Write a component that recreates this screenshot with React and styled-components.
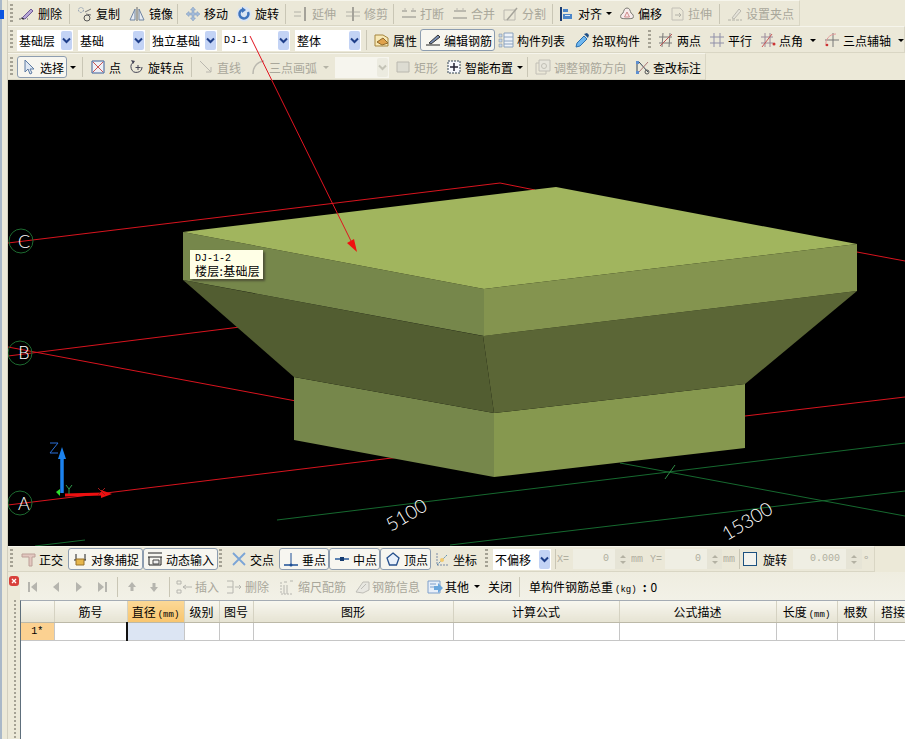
import React from 'react';
import styled, { createGlobalStyle } from 'styled-components';

const GlobalStyle = createGlobalStyle`
  html, body { margin: 0; padding: 0; background: #ece9d8; }
  body { font-family: "Noto Sans CJK SC", "Liberation Sans", sans-serif; font-size: 12px; color: #000; }
`;

const Page = styled.div`
  position: relative;
  display: flex;
  width: 905px;
  height: 739px;
  overflow: hidden;
  background: #ece9d8;
`;

const LeftEdge = styled.div`
  flex: none;
  width: 8px;
  box-sizing: border-box;
  border-left: 2px solid #a9b8c8;
  border-right: 1px solid #d2cfbf;
  background: #ece9d8;
`;

const WindowTab = styled.div`
  width: 4px;
  height: 9px;
  margin: 10px 0 0 -2px;
  background: #0a55e0;
`;

const Main = styled.div`
  flex: 1;
  min-width: 0;
  display: flex;
  flex-direction: column;
`;

const Toolbar = styled.div`
  flex: none;
  display: flex;
  align-items: center;
  box-sizing: border-box;
  height: ${p => p.$h || 27}px;
  width: ${p => (p.$w ? `${p.$w}px` : '100%')};
  padding: ${p => p.$pt ?? 1}px 0 0 2px;
  background: #ebe8d8;
  border-top: 1px solid #f6f5ec;
  border-bottom: 1px solid #d9d6c4;
  border-right: 1px solid #d9d6c4;
  white-space: nowrap;
  overflow: hidden;
`;

const Grip = styled.div`
  flex: none;
  width: 3px;
  height: 20px;
  margin: 0 ${p => p.$mr || 0}px 0 ${p => p.$ml || 0}px;
  background: repeating-linear-gradient(to bottom, #a5a294 0 2px, transparent 2px 4px);
`;

const Sep = styled.div`
  flex: none;
  width: 8px;
  height: 20px;
  background: linear-gradient(#c9c6b5, #c9c6b5) center / 1px 100% no-repeat;
`;

const ToolItem = styled.div`
  flex: none;
  display: flex;
  align-items: center;
  box-sizing: border-box;
  width: ${p => p.$w}px;
  height: ${p => (p.$pressed ? 22 : 21)}px;
  color: ${p => (p.$off ? '#a9a79b' : '#000')};
  border: ${p => (p.$pressed ? '1px solid #8d9db0' : 'none')};
  border-radius: ${p => (p.$pressed ? 3 : 0)}px;
  background: ${p => (p.$pressed ? '#f7f6f0' : 'transparent')};
  svg { opacity: ${p => (p.$off ? 0.42 : 1)}; filter: ${p => (p.$off ? 'grayscale(1)' : 'none')}; }
`;

const IconSlot = styled.span`
  flex: none;
  display: flex;
  align-items: center;
  justify-content: center;
  width: ${p => p.$w}px;
`;

const Caret = styled.span`
  flex: none;
  width: 0;
  height: 0;
  margin-left: ${p => p.$ml}px;
  border-left: 3px solid transparent;
  border-right: 3px solid transparent;
  border-top: 3px solid ${p => (p.$off ? '#b5b3a6' : '#000')};
`;

const SelectBox = styled.div`
  flex: none;
  display: flex;
  align-items: center;
  justify-content: space-between;
  width: ${p => p.$w}px;
  height: 21px;
  margin-right: ${p => p.$mr ?? 5}px;
  padding-left: 2px;
  box-sizing: border-box;
  background: ${p => (p.$off ? '#f6f5ee' : '#fff')};
  font-family: ${p => (p.$mono ? '"Liberation Mono", monospace' : 'inherit')};
  font-size: ${p => (p.$mono ? 10 : 12)}px;
`;

const ArrowBox = styled.span`
  flex: none;
  display: flex;
  align-items: center;
  justify-content: center;
  width: 11px;
  height: 19px;
  margin-right: 1px;
  border-radius: 2px;
  background: ${p => (p.$off ? '#ecebe0' : '#c3d3f5')};
`;

const NumLabel = styled.span`
  flex: none;
  width: ${p => p.$w}px;
  margin-left: ${p => p.$ml || 0}px;
  font-family: "Liberation Mono", monospace;
  font-size: 10px;
  color: #b0ae9f;
`;

const NumInput = styled.div`
  flex: none;
  box-sizing: border-box;
  width: ${p => p.$w}px;
  height: 20px;
  margin-left: ${p => p.$ml || 0}px;
  padding-right: 6px;
  text-align: right;
  line-height: 20px;
  font-family: "Liberation Mono", monospace;
  font-size: 10px;
  color: #b0ae9f;
  background: #efeee3;
`;

const Spinner = styled.div`
  flex: none;
  display: flex;
  flex-direction: column;
  align-items: center;
  justify-content: center;
  gap: 3px;
  width: ${p => p.$w || 15}px;
  height: 20px;
  background: #e6e4d6;
`;

const SpinUp = styled.i`
  width: 0;
  height: 0;
  border-left: 3px solid transparent;
  border-right: 3px solid transparent;
  border-bottom: 3px solid #b3b1a3;
`;

const SpinDown = styled(SpinUp)`
  border-bottom: none;
  border-top: 3px solid #b3b1a3;
`;

const CheckBox = styled.div`
  flex: none;
  box-sizing: border-box;
  width: 14px;
  height: 14px;
  border: 1px solid #1c5180;
  background: #f3f3ee;
`;

const PlainLabel = styled.span`
  flex: none;
  margin-left: ${p => p.$ml || 0}px;
  color: ${p => p.$color || '#000'};
`;

const Viewport = styled.div`
  position: relative;
  flex: none;
  height: 466px;
  background: #000;
  overflow: hidden;
  svg { display: block; }
`;

const Tooltip = styled.div`
  position: absolute;
  left: 182px;
  top: 170px;
  box-sizing: border-box;
  width: 73px;
  height: 29px;
  padding: 3px 0 0 5px;
  line-height: 12px;
  letter-spacing: 0.3px;
  white-space: nowrap;
  background: #ffffe6;
  box-shadow: 2px 2px 2px rgba(70, 70, 50, 0.85);
`;

const TipCode = styled.div`
  font-family: "Liberation Mono", monospace;
  font-size: 10px;
  letter-spacing: 0;
`;

const Panel = styled.div`
  flex: 1;
  min-height: 0;
  display: flex;
`;

const PanelSide = styled.div`
  flex: none;
  display: flex;
  flex-direction: column;
  align-items: center;
  box-sizing: border-box;
  width: 12px;
  padding-top: 4px;
  background: #ece9d8;
`;

const CloseBadge = styled.svg`
  flex: none;
  display: block;
`;

const SideDots = styled.div`
  flex: 1;
  width: 2px;
  margin: 14px 0 0 2px;
  background: repeating-linear-gradient(to bottom, #a5a294 0 2px, transparent 2px 4px);
`;

const PanelBody = styled.div`
  flex: 1;
  min-width: 0;
  display: flex;
  flex-direction: column;
`;

const PanelBar = styled.div`
  flex: none;
  display: flex;
  align-items: center;
  box-sizing: border-box;
  height: 28px;
  padding: 1px 0 0 1px;
  white-space: nowrap;
  background: linear-gradient(#efede0, #f2f1e7);
`;

const WeightLabel = styled.span`
  flex: none;
  margin-left: 6px;
`;

const Unit = styled.span`
  margin: 0 0 0 2px;
  font-family: "Liberation Mono", monospace;
  font-size: 9px;
`;

const Colon = styled.span`
  margin: 0 4px 0 6px;
  font-weight: 700;
`;

const TableWrap = styled.div`
  flex: 1;
  min-height: 0;
  overflow: hidden;
  background: #fff;
  border-left: 1px solid #5e6f7c;
  border-top: 1px solid #a5acb4;
`;

const Grid = styled.table`
  table-layout: fixed;
  width: 891px;
  border-collapse: collapse;
`;

const HeadCell = styled.th`
  height: 21px;
  padding: 0;
  font-weight: 400;
  box-sizing: border-box;
  border-right: 1px solid #d5d2c2;
  border-bottom: 1px solid #bcb9a8;
  background: ${p => (p.$active
    ? 'linear-gradient(#fbd896, #f8c56f)'
    : 'linear-gradient(#f8f7ef, #e6e3d3)')};
`;

const BodyCell = styled.td`
  height: 18px;
  padding: 0;
  box-sizing: border-box;
  text-align: center;
  border-right: 1px solid #c6c6c6;
  border-bottom: 1px solid #c6c6c6;
  border-left: ${p => (p.$current ? '2px solid #111' : 'none')};
  background: ${p => (p.$current ? '#dce5f3' : p.$mark ? '#fbd191' : '#fff')};
  font-family: ${p => (p.$mark ? '"Liberation Mono", monospace' : 'inherit')};
  font-size: ${p => (p.$mark ? 10 : 12)}px;
`;

const Annotation = styled.svg`
  position: absolute;
  left: 0;
  top: 0;
  pointer-events: none;
`;

// toolbar glyphs, all on a 16x16 grid
const glyphs = {
  erase: <><path d="M1 13h6M9 13h1" stroke="#666" strokeDasharray="2 1" /><path d="M4 12 13 3l2 2-8 8z" fill="#b7a7d6" stroke="#6f5a96" /><path d="M3 12l3 1" stroke="#333" /></>,
  copy: <><circle cx="4" cy="4" r="2.5" fill="none" stroke="#8b9bb0" strokeDasharray="2 1" /><circle cx="10" cy="12" r="3" fill="none" stroke="#555" /><path d="M8 6l6-3M9 8l5 1" stroke="#777" /></>,
  mirror: <><path d="M8 1v14" stroke="#666" /><path d="M6 3v11H1z" fill="#e6ebf2" stroke="#6f84a2" /><path d="M10 3v11h5z" fill="#e6ebf2" stroke="#6f84a2" /></>,
  move: <path d="M8 1l2.500 3H9v3h3V5.500L15 8l-3 2.500V9H9v3h1.500L8 15l-2.500-3H7V9H4v1.500L1 8l3-2.500V7h3V4H5.500z" fill="#a3bbd8" stroke="#7d99bd" strokeWidth=".5" />,
  rotate: <><circle cx="8" cy="8" r="7.500" fill="#dbe5f2" /><path d="M12 6a4.500 4.500 0 1 1-5-2.500" fill="none" stroke="#3f74bd" strokeWidth="2.500" /><path d="M6 1l4 3-4 3z" fill="#3f74bd" /></>,
  extend: <><path d="M1 6h7M1 10h7" stroke="#666" /><path d="M12 1v14" stroke="#444" strokeWidth="2" /></>,
  trim: <><path d="M1 6h14M1 10h14" stroke="#666" /><path d="M8 1v14" stroke="#444" strokeWidth="2" /></>,
  breakLine: <><path d="M1 5h5M10 5h5M1 11h14" stroke="#555" strokeWidth="1.500" /><path d="M4 2v3M12 2v3" stroke="#777" /></>,
  merge: <><path d="M2 5h12M1 12h14" stroke="#555" strokeWidth="1.500" /><path d="M5 2v3M11 2v3" stroke="#777" /></>,
  split: <><path d="M1 4h11v10H1z" fill="none" stroke="#777" /><path d="M4 14 14 2" stroke="#444" strokeWidth="1.500" /></>,
  align: <><path d="M2 1v14" stroke="#1c3c70" strokeWidth="2" /><path d="M4 3h5v3H4z" fill="#4c86c9" /><path d="M4 8h9v5H4z" fill="#4c86c9" /><path d="M6 9.500h5" stroke="#d9e6f5" /></>,
  offset: <><path d="M8 2c3 0 3 3 4 5 2 1 3 3 2 5-1 1-11 1-12 0-1-2 0-4 2-5 1-2 1-5 4-5z" fill="#f7ecec" stroke="#7a7a72" /><path d="M5.500 11 8 6l2.500 5z" fill="none" stroke="#cf8a8a" /></>,
  stretch: <><path d="M2 2h8l3 3v9H2z" fill="none" stroke="#888" /><path d="M5 9h6M9 7l2 2-2 2" fill="none" stroke="#666" /></>,
  grip: <><path d="M1 14h14" stroke="#666" strokeDasharray="3 1" /><path d="M5 12 12 3l2 2-7 8z" fill="#ddd" stroke="#777" /></>,
  props: <><path d="M1 3h8l5 3v8H1z" fill="#f7e8b5" stroke="#a5853f" /><path d="M3 10l6-4 5 5-6 2z" fill="#e0a24c" stroke="#8d6a2f" /></>,
  pen: <><path d="M1 13h14" stroke="#222" /><path d="M4 11 13 3l2 2-9 7z" fill="#7a8fb5" stroke="#333" /></>,
  list: <><path d="M1 2h3v3H1zM1 7h3v3H1zM1 12h3v3H1z" fill="#c5d6ea" stroke="#7a8a9a" strokeWidth=".5" /><path d="M6 1h9v14H6z" fill="#eef3f9" stroke="#8aa2bf" /><path d="M6 5h9M6 9h9M6 12h9" stroke="#8aa2bf" /></>,
  pick: <><path d="M2 15l1-4 7-7 3 3-7 7z" fill="#6fb7ef" stroke="#2a6fae" /><path d="M10 2l4 4 1-3-2-2z" fill="#1f4f86" /></>,
  twoPoint: <><path d="M1 5h13M1 11h13M5 1l-1 14M12 1l-1 14" stroke="#7a7a7a" /><path d="M2 14 14 2" stroke="#b55" /></>,
  parallel: <path d="M1 5h14M1 11h14M5 1v14M11 1v14" stroke="#8f8fa8" />,
  angle: <><path d="M1 5h12M1 11h12M5 1v14M10 1v14" stroke="#9a8a9a" /><path d="M2 15 12 2" stroke="#c55" /><circle cx="14" cy="12" r="1.500" fill="#c33" /></>,
  threeAxis: <><path d="M1 8h14M9 1v14" stroke="#777" /><path d="M2 14a10 10 0 0 1 10-12" fill="none" stroke="#e29a9a" /><circle cx="3" cy="13" r="1.300" fill="#c33" /></>,
  arrow: <path d="M4 1v12l3-3 2 5 2-1-2-4h4z" fill="#dfe8f3" stroke="#5d7ba3" />,
  point: <><path d="M2 2h12v12H2z" fill="#eef0f6" stroke="#3d5f9a" /><path d="M3 3l10 10M13 3 3 13" stroke="#c55" /></>,
  rotatePoint: <><path d="M13 8a5.500 5.500 0 1 1-8-5" fill="none" stroke="#445" /><path d="M2 1l4 1-2 3z" fill="#445" /><path d="M9 6v5M6.500 8.500h5" stroke="#445" /></>,
  line: <path d="M2 2l11 11M13 8v5H8" fill="none" stroke="#777" />,
  arc: <><path d="M3 15C3 8 7 3 14 2" fill="none" stroke="#777" strokeWidth="1.500" /></>,
  rect: <path d="M2 3h12v10H2z" fill="#ccc" stroke="#777" />,
  smart: <><path d="M2 2h12v12H2z" fill="#f5f7fb" stroke="#345" strokeDasharray="2 1" /><path d="M8 4v8M4 8h8" stroke="#223" strokeWidth="1.500" /></>,
  adjust: <><path d="M1 4h10v11H1z" fill="none" stroke="#888" /><path d="M4 1h11v11H4z" fill="#e4e4e4" stroke="#888" /><circle cx="9" cy="7" r="2.500" fill="none" stroke="#888" /></>,
  mark: <><path d="M2 2h3v3H2zM2 12h3v3H2z" fill="#5d8fd0" /><path d="M3 5v7M5 3l9 10" stroke="#345" /><path d="M14 3 5 13" stroke="#a77" /><circle cx="13" cy="13" r="2" fill="none" stroke="#555" /></>,
  ortho: <><path d="M2 3h13v3h-3v9H9V6H2z" fill="#e3c8c0" stroke="#bda098" /></>,
  snap: <><path d="M2 9h12M4 3v6M13 3v6" stroke="#222" /><path d="M4 8h8v6H4z" fill="#e6b64c" stroke="#96702a" /></>,
  dynamic: <><path d="M1 2h14M1 6h14" stroke="#222" /><path d="M2 6v8h12V6" fill="none" stroke="#222" /><path d="M6 9h6v4H6z" fill="#eee" stroke="#444" /></>,
  cross: <path d="M2 2l12 12M14 2 2 14" stroke="#7ba5d6" strokeWidth="1.800" />,
  foot: <><path d="M1 14h14" stroke="#1d4f96" strokeWidth="1.500" /><path d="M8 2v12" stroke="#1d4f96" /><circle cx="8" cy="14" r="1.500" fill="#1d4f96" /></>,
  mid: <><path d="M1 8h14" stroke="#2a5b9c" strokeWidth="1.500" /><path d="M6 6h4v4H6z" fill="#163c70" /></>,
  vertex: <path d="M8 2l6 5-2.500 7h-7L2 7z" fill="#e8f0fa" stroke="#254f8c" strokeWidth="1.300" />,
  coord: <><path d="M3 2v12h12" stroke="#7a8aa5" strokeDasharray="2 1" fill="none" /><path d="M3 14 13 4" stroke="#58a" strokeDasharray="2 1" /><circle cx="8" cy="9" r="2" fill="#f4c96b" /></>,
  first: <><path d="M3 3h2v10H3z" fill="#666" /><path d="M12 3v10L6 8z" fill="#666" /></>,
  prev: <path d="M11 3v10L5 8z" fill="#666" />,
  next: <path d="M5 3v10l6-5z" fill="#666" />,
  last: <><path d="M11 3h2v10h-2z" fill="#666" /><path d="M4 3v10l6-5z" fill="#666" /></>,
  up: <path d="M8 3l4 5H9.500v4h-3V8H4z" fill="#666" />,
  down: <path d="M8 13l4-5H9.500V4h-3v4H4z" fill="#666" />,
  insert: <><path d="M1 2h4v3H1zM1 11h4v3H1z" fill="none" stroke="#666" /><path d="M7 8h9M10 6 7 8l3 2" fill="none" stroke="#666" /></>,
  remove: <><path d="M1 2h6M1 8h6M1 14h6M7 2v12" fill="none" stroke="#666" /><path d="M9 8h6M13 6l2 2-2 2" fill="none" stroke="#666" /></>,
  scale: <><path d="M2 3v12h12" fill="none" stroke="#666" strokeDasharray="2 1" /><path d="M5 3h3M11 2h3M5 6v9M8 6v9" stroke="#666" /></>,
  info: <><path d="M2 13 9 3h6v8l-6 3z" fill="#ddd" stroke="#777" /><path d="M7 10l5-5" stroke="#777" /></>,
  other: <><path d="M1 2h12v12H1z" fill="#e7eff9" stroke="#7f9fca" /><path d="M3 5h6M3 8h4" stroke="#7f9fca" /><path d="M7 7h4V4l5 5-5 5v-3H7z" fill="#6aa6dc" /></>,
};

function Icon({ name }) {
  return (
    <svg width="16" height="16" viewBox="0 0 16 16">
      {glyphs[name]}
    </svg>
  );
}

function Tool({ icon, label, w, iw, off, pressed, caret }) {
  return (
    <ToolItem $w={w} $off={off} $pressed={pressed}>
      <IconSlot $w={iw}>{icon && <Icon name={icon} />}</IconSlot>
      {label}
      {caret !== undefined && <Caret $ml={caret} $off={off} />}
    </ToolItem>
  );
}

function Chevron({ off }) {
  return (
    <svg width="9" height="7" viewBox="0 0 9 7">
      <path d="M1 1.500 4.500 5 8 1.500" fill="none" stroke={off ? '#c4c3b6' : '#1f3f8a'} strokeWidth="2" />
    </svg>
  );
}

function Select({ w, mr, mono, off, children }) {
  return (
    <SelectBox $w={w} $mr={mr} $mono={mono} $off={off}>
      <span>{children}</span>
      <ArrowBox $off={off}><Chevron off={off} /></ArrowBox>
    </SelectBox>
  );
}

function Spin({ w }) {
  return <Spinner $w={w}><SpinUp /><SpinDown /></Spinner>;
}

function ModifyBar() {
  return (
    <Toolbar $h={26} $w={792}>
      <Grip $mr={1} />
      <Tool icon="erase" label="删除" w={51} iw={24} />
      <Sep />
      <Tool icon="copy" label="复制" w={51} iw={23} />
      <Tool icon="mirror" label="镜像" w={49} iw={25} />
      <Sep />
      <Tool icon="move" label="移动" w={52} iw={23} />
      <Tool icon="rotate" label="旋转" w={48} iw={22} />
      <Sep />
      <Tool icon="extend" label="延伸" w={52} iw={23} off />
      <Tool icon="trim" label="修剪" w={48} iw={23} off />
      <Sep />
      <Tool icon="breakLine" label="打断" w={51} iw={23} off />
      <Tool icon="merge" label="合并" w={51} iw={23} off />
      <Tool icon="split" label="分割" w={49} iw={23} off />
      <Sep />
      <Tool icon="align" label="对齐" w={60} iw={22} caret={4} />
      <Tool icon="offset" label="偏移" w={51} iw={22} />
      <Tool icon="stretch" label="拉伸" w={48} iw={21} off />
      <Sep />
      <Tool icon="grip" label="设置夹点" w={76} iw={23} off />
    </Toolbar>
  );
}

function ComponentBar() {
  return (
    <Toolbar>
      <Grip $mr={4} />
      <Select w={56}>基础层</Select>
      <Select w={67}>基础</Select>
      <Select w={67}>独立基础</Select>
      <Select w={68} mono>DJ-1</Select>
      <Select w={66} mr={1}>整体</Select>
      <Sep />
      <Tool icon="props" label="属性" w={50} iw={23} />
      <Tool icon="pen" label="编辑钢筋" w={75} iw={23} pressed />
      <Tool icon="list" label="构件列表" w={76} iw={22} />
      <Tool icon="pick" label="拾取构件" w={74} iw={21} />
      <Grip $ml={3} $mr={4} />
      <Tool icon="twoPoint" label="两点" w={50} iw={22} />
      <Tool icon="parallel" label="平行" w={51} iw={23} />
      <Tool icon="angle" label="点角" w={64} iw={23} caret={7} />
      <Tool icon="threeAxis" label="三点辅轴" w={82} iw={23} caret={7} />
    </Toolbar>
  );
}

function DrawBar() {
  return (
    <Toolbar $w={698}>
      <Grip $mr={4} />
      <Tool icon="arrow" label="选择" w={50} iw={22} pressed />
      <Tool w={11} iw={3} caret={0} />
      <Sep />
      <Tool icon="point" label="点" w={40} iw={23} />
      <Tool icon="rotatePoint" label="旋转点" w={61} iw={22} />
      <Sep />
      <Tool icon="line" label="直线" w={52} iw={22} off />
      <Tool icon="arc" label="三点画弧" w={88} iw={22} off caret={6} />
      <Select w={54} mr={3} off />
      <Tool icon="rect" label="矩形" w={50} iw={22} off />
      <Tool icon="smart" label="智能布置" w={81} iw={23} caret={4} />
      <Sep />
      <Tool icon="adjust" label="调整钢筋方向" w={99} iw={23} off />
      <Tool icon="mark" label="查改标注" w={76} iw={23} />
    </Toolbar>
  );
}

function SnapBar() {
  return (
    <Toolbar $h={26} $w={867} $pt={0}>
      <Grip $mr={4} />
      <Tool icon="ortho" label="正交" w={51} iw={22} />
      <Tool icon="snap" label="对象捕捉" w={75} iw={22} pressed />
      <Tool icon="dynamic" label="动态输入" w={75} iw={22} pressed />
      <Grip $ml={1} $mr={5} />
      <Tool icon="cross" label="交点" w={52} iw={23} />
      <Tool icon="foot" label="垂点" w={50} iw={22} pressed />
      <Tool icon="mid" label="中点" w={51} iw={23} pressed />
      <Tool icon="vertex" label="顶点" w={51} iw={23} pressed />
      <Tool icon="coord" label="坐标" w={51} iw={22} />
      <Grip $ml={3} $mr={5} />
      <Select w={58} mr={0}>不偏移</Select>
      <Sep />
      <NumLabel $w={16} $ml={-2}>X=</NumLabel>
      <NumInput $w={42}>0</NumInput>
      <Spin />
      <NumLabel $w={12} $ml={1}>mm</NumLabel>
      <NumLabel $w={15} $ml={7}>Y=</NumLabel>
      <NumInput $w={42}>0</NumInput>
      <Spin />
      <NumLabel $w={12} $ml={1}>mm</NumLabel>
      <Sep />
      <CheckBox />
      <PlainLabel $ml={6}>旋转</PlainLabel>
      <NumInput $w={53} $ml={6}>0.000</NumInput>
      <Spin w={16} />
      <PlainLabel $ml={2} $color="#a9a79b">°</PlainLabel>
    </Toolbar>
  );
}

const AXIS_TEXT = { fill: '#fff', fontFamily: 'Lato, "Liberation Sans", sans-serif', fontWeight: 300 };

function Scene() {
  return (
    <svg width="897" height="466" viewBox="8 80 897 466">
      <g stroke="#16692f" strokeWidth="1" fill="none">
        <path d="M277 520 905 443" />
        <path d="M450 545 905 491" />
        <path d="M620 463 905 516" />
        <path d="M665 479 675 465" stroke="#2f8a45" />
        <path d="M35 546 85 540" />
      </g>
      <g stroke="#d8141e" strokeWidth="1" fill="none">
        <path d="M8 243 500 183 535 190" />
        <path d="M857 252 905 261" />
        <path d="M8 356 240 327" />
        <path d="M8 347 296 401" />
        <path d="M8 505 400 457" />
        <path d="M745 416 905 397" />
      </g>
      <g fill="none" stroke="#1d6b30">
        <circle cx="21" cy="241" r="12" />
        <circle cx="20" cy="353" r="12" />
        <circle cx="20" cy="503" r="12" />
      </g>
      <g {...AXIS_TEXT} fontSize="18" textAnchor="middle">
        <text x="24" y="248">C</text>
        <text x="24" y="359">B</text>
        <text x="24" y="510">A</text>
      </g>
      <text {...AXIS_TEXT} fontSize="19" transform="translate(391 532) rotate(-31)">5100</text>
      <text {...AXIS_TEXT} fontSize="19" transform="translate(727 541) rotate(-31)">15300</text>

      {/* foundation block */}
      <polygon points="294,377 494,413 494,477 294,440" fill="#76874b" />
      <polygon points="494,413 745,384 745,448 494,477" fill="#86984f" />
      <polygon points="183,280 483,336 494,413 294,377" fill="#525d31" />
      <polygon points="483,336 857,291 745,384 494,413" fill="#5b6636" />
      <polygon points="183,232 484,289 484,336 183,280" fill="#76874b" />
      <polygon points="484,289 857,244 857,291 484,336" fill="#84944f" />
      <polygon points="183,232 556,187 857,244 484,289" fill="#a1b55e" />

      {/* axis gizmo */}
      <path d="M62 493V458" stroke="#1c82ee" strokeWidth="3.500" />
      <path d="M62 447l4 12h-8z" fill="#1c82ee" />
      <path d="M65 495 103 494" stroke="#ee1010" strokeWidth="3" />
      <path d="M112 494l-11-4v8z" fill="#ee1010" />
      <path d="M56 492l4-3v7z" fill="#2ee02e" />
      <path d="M50 443h8l-8 10h8" fill="none" stroke="#2a6fd8" />
      <path d="M66 485l3 4 3-4M69 489v5" fill="none" stroke="#2e9a4a" />
      <path d="M98 488l7 7M105 488l-7 7" fill="none" stroke="#a01818" />
    </svg>
  );
}

const COLUMNS = [
  { w: 33, label: '' },
  { w: 73, label: '筋号' },
  { w: 57, label: '直径', unit: '(mm)', active: true },
  { w: 35, label: '级别' },
  { w: 34, label: '图号' },
  { w: 200, label: '图形' },
  { w: 166, label: '计算公式' },
  { w: 157, label: '公式描述' },
  { w: 61, label: '长度', unit: '(mm)' },
  { w: 37, label: '根数' },
  { w: 38, label: '搭接' },
];

function RebarTable() {
  return (
    <TableWrap>
      <Grid>
        <colgroup>
          {COLUMNS.map((c, i) => <col key={i} style={{ width: c.w }} />)}
        </colgroup>
        <thead>
          <tr>
            {COLUMNS.map((c, i) => (
              <HeadCell key={i} $active={c.active}>
                {c.label}{c.unit && <Unit>{c.unit}</Unit>}
              </HeadCell>
            ))}
          </tr>
        </thead>
        <tbody>
          <tr>
            {COLUMNS.map((c, i) => (
              <BodyCell key={i} $mark={i === 0} $current={i === 2}>
                {i === 0 ? '1*' : ''}
              </BodyCell>
            ))}
          </tr>
        </tbody>
      </Grid>
    </TableWrap>
  );
}

function RebarPanel() {
  return (
    <Panel>
      <PanelSide>
        <CloseBadge width="10" height="10" viewBox="0 0 10 10">
          <rect width="10" height="10" rx="3" fill="#d8403a" />
          <path d="M3 3l4 4M7 3 3 7" stroke="#fff" strokeWidth="1.300" />
        </CloseBadge>
        <SideDots />
      </PanelSide>
      <PanelBody>
        <PanelBar>
          {['first', 'prev', 'next', 'last'].map(n => (
            <Tool key={n} icon={n} w={23} iw={23} off />
          ))}
          <Sep />
          <Tool icon="up" w={22} iw={22} off />
          <Tool icon="down" w={22} iw={22} off />
          <Sep />
          <Tool icon="insert" label="插入" w={50} iw={22} off />
          <Tool icon="remove" label="删除" w={53} iw={22} off />
          <Tool icon="scale" label="缩尺配筋" w={76} iw={22} off />
          <Tool icon="info" label="钢筋信息" w={73} iw={20} off />
          <Tool icon="other" label="其他" w={59} iw={20} caret={5} />
          <Tool label="关闭" w={31} iw={4} />
          <Sep />
          <WeightLabel>单构件钢筋总重<Unit>(kg)</Unit><Colon>:</Colon>0</WeightLabel>
        </PanelBar>
        <RebarTable />
      </PanelBody>
    </Panel>
  );
}

export default function App() {
  return (
    <Page>
      <GlobalStyle />
      <LeftEdge><WindowTab /></LeftEdge>
      <Main>
        <ModifyBar />
        <ComponentBar />
        <DrawBar />
        <Viewport>
          <Scene />
          <Tooltip>
            <TipCode>DJ-1-2</TipCode>
            楼层:基础层
          </Tooltip>
        </Viewport>
        <SnapBar />
        <RebarPanel />
      </Main>
      <Annotation width="905" height="739" viewBox="0 0 905 739">
        <path d="M250 36 351 241" stroke="#e01420" strokeWidth="1" />
        <path d="M357 252 347 243l7-4z" fill="#f01010" />
      </Annotation>
    </Page>
  );
}
